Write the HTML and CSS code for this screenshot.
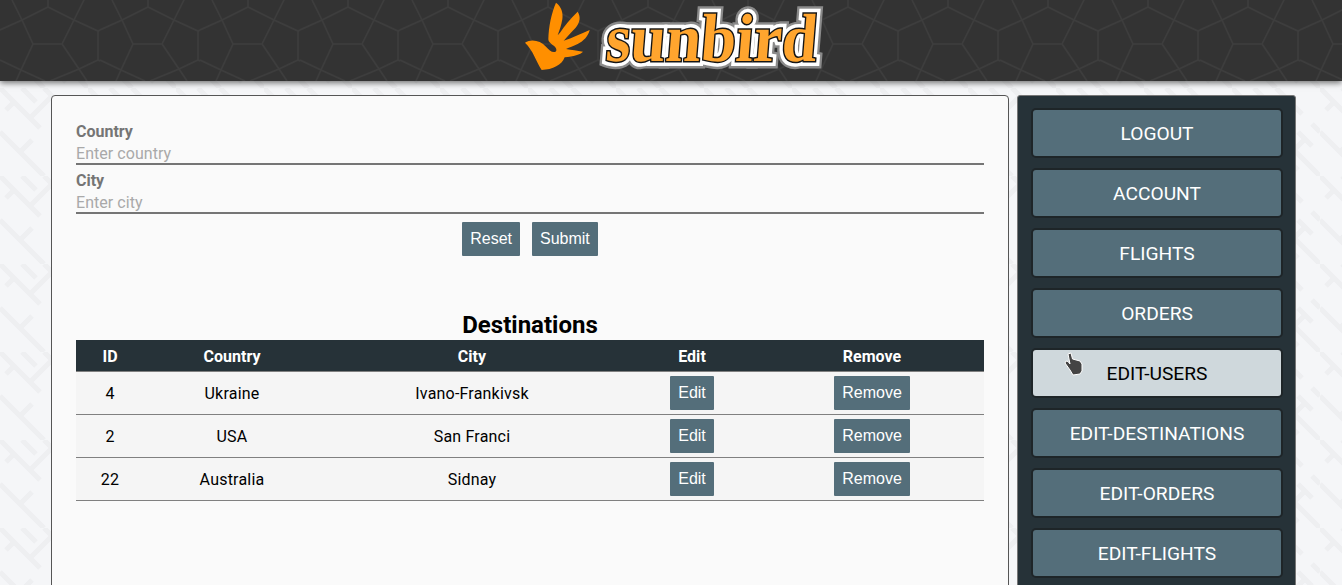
FILE: index.html
```html
<!DOCTYPE html>
<html lang="en">
<head>
<meta charset="utf-8">
<title>Sunbird</title>
<link rel="stylesheet" href="styles.css">
</head>
<body>
<header class="site-header">
  <div class="brand">
    <svg class="brand-hand" viewBox="0 0 360 240" aria-hidden="true">
      <path d="M42 128 C62 116 88 122 105 140 C114 150 122 158 132 156 C140 153 136 142 126 136 C118 130 112 125 112 118 C113 80 121 40 135 8 C151 20 157 38 154 58 C151 76 146 90 140 106 L147 98 C161 78 178 55 200 35 C210 50 207 68 194 83 C181 97 170 108 158 122 C184 114 208 102 236 90 C232 108 218 123 200 132 C186 139 176 142 165 147 C182 150 198 152 216 155 C208 164 188 169 161 172 C153 195 125 209 92 210 C78 190 66 150 42 128 Z"/>
    </svg>
    <span class="brand-word" data-text="sunbird">sunbird</span>
  </div>
</header>

<main class="layout">
  <section class="panel">
    <form class="dest-form">
      <div class="field">
        <label class="field-label" for="country">Country</label>
        <input class="field-input" id="country" type="text" placeholder="Enter country">
      </div>
      <div class="field">
        <label class="field-label" for="city">City</label>
        <input class="field-input" id="city" type="text" placeholder="Enter city">
      </div>
      <div class="form-actions">
        <button class="btn" type="button">Reset</button>
        <button class="btn" type="button">Submit</button>
      </div>
    </form>

    <h2 class="table-title">Destinations</h2>
    <table class="dest-table">
      <colgroup>
        <col class="col-id"><col class="col-country"><col class="col-city"><col class="col-edit"><col class="col-remove">
      </colgroup>
      <thead>
        <tr><th>ID</th><th>Country</th><th>City</th><th>Edit</th><th>Remove</th></tr>
      </thead>
      <tbody>
        <tr><td>4</td><td>Ukraine</td><td>Ivano-Frankivsk</td><td><button class="btn" type="button">Edit</button></td><td><button class="btn" type="button">Remove</button></td></tr>
        <tr><td>2</td><td>USA</td><td>San Franci</td><td><button class="btn" type="button">Edit</button></td><td><button class="btn" type="button">Remove</button></td></tr>
        <tr><td>22</td><td>Australia</td><td>Sidnay</td><td><button class="btn" type="button">Edit</button></td><td><button class="btn" type="button">Remove</button></td></tr>
      </tbody>
    </table>
  </section>

  <nav class="sidebar">
    <a class="nav-btn">LOGOUT</a>
    <a class="nav-btn">ACCOUNT</a>
    <a class="nav-btn">FLIGHTS</a>
    <a class="nav-btn">ORDERS</a>
    <a class="nav-btn is-hover">EDIT-USERS
      <svg class="cursor" viewBox="0 0 20 24" aria-hidden="true">
        <path d="M4 2 L7 1 L8.5 7 L16 9 L18 12 L18 19 L16 22 L9 23 L6 18 L1 11 L2 9 L4 9.5 L6 12 Z"/>
      </svg>
    </a>
    <a class="nav-btn">EDIT-DESTINATIONS</a>
    <a class="nav-btn">EDIT-ORDERS</a>
    <a class="nav-btn">EDIT-FLIGHTS</a>
  </nav>
</main>
</body>
</html>
```
FILE: styles.css
```css
* { box-sizing: border-box; }

html, body {
  margin: 0;
  height: 585px;
  overflow: hidden;
}

body {
  font-family: Roboto, "Liberation Sans", sans-serif;
  font-size: 16px;
  color: #000;
  background-color: #f5f6f8;
  background-image: url("data:image/svg+xml,%3Csvg xmlns='http://www.w3.org/2000/svg' width='88' height='88'%3E%3Cg fill='none' stroke='%23eeeff1' stroke-width='5'%3E%3Cpath d='M0 0L40 40M55 55L88 88M44 0L70 26M80 36L88 44M0 44L44 88M30 30L52 8M62 62L73 51M22 0L36 14M66 44L80 58M20 64L32 52M14 14L6 22M58 74L66 82'/%3E%3C/g%3E%3C/svg%3E");
}

.site-header {
  height: 81px;
  display: flex;
  justify-content: center;
  background-color: #333;
  background-image: url("data:image/svg+xml,%3Csvg xmlns='http://www.w3.org/2000/svg' width='100' height='81'%3E%3Cg fill='none' stroke='%233d3d3d' stroke-width='1.6'%3E%3Cpath d='M48 0V7L22 20L0 30M48 7L74 20L98 31L100 30M98 31V60L100 61M12 0L22 20L33 44H62L74 20L84 0M33 44L21 70L16 81M0 60L21 70L45 81M62 44L79 69L87 81M98 60L79 69L50 81'/%3E%3C/g%3E%3C/svg%3E");
  background-repeat: repeat-x;
  box-shadow: 0 2px 6px rgba(0, 0, 0, .55);
}

.brand {
  display: flex;
  align-items: flex-start;
}

.brand-hand {
  width: 120px;
  height: 80px;
  flex: none;
  fill: #ff8f00;
}

.brand-word {
  position: relative;
  isolation: isolate;
  width: 240px;
  margin: 3px 0 0 -39px;
  font-family: "Liberation Serif", serif;
  font-weight: 700;
  font-size: 68px;
  line-height: 70px;
  text-align: center;
  color: #ffa52e;
  -webkit-text-stroke: 3px #151515;
  paint-order: stroke fill;
  transform: scaleX(.93) skewX(-5deg);
}

.brand-word::before,
.brand-word::after {
  content: attr(data-text);
  position: absolute;
  left: 0;
  right: 0;
  top: 0;
  z-index: -1;
}

.brand-word::before {
  color: #8a8a8a;
  -webkit-text-stroke: 15px #8a8a8a;
}

.brand-word::after {
  color: #fff;
  -webkit-text-stroke: 10px #fff;
}

.layout {
  display: flex;
  align-items: flex-start;
  gap: 8px;
  padding: 14px 0 0 51px;
}

.panel {
  width: 958px;
  height: 560px;
  flex: none;
  padding: 26px 24px 0;
  background: #fafafa;
  border: 1px solid #555;
  border-radius: 4px;
}

.field { margin-bottom: 6px; }

.field-label {
  display: block;
  font-weight: 700;
  line-height: 19px;
  color: #757575;
}

.field-input {
  display: block;
  width: 100%;
  height: 24px;
  padding: 2px 0 0;
  border: 0;
  border-bottom: 2px solid #757575;
  background: transparent;
  font-family: Roboto, sans-serif;
  font-size: 16px;
  letter-spacing: .05px;
  outline: none;
}

.field-input::placeholder {
  color: #a9a9a9;
  opacity: 1;
}

.form-actions {
  display: flex;
  justify-content: center;
  gap: 12px;
  margin-top: 8px;
}

.btn {
  height: 34px;
  padding: 0 8px;
  border: 0;
  border-radius: 1px;
  background: #546e7a;
  color: #fff;
  font-family: "Liberation Sans", Arial, sans-serif;
  font-size: 16px;
  letter-spacing: 0;
}

.table-title {
  margin: 55px 0 1px;
  font-size: 24px;
  font-weight: 700;
  line-height: 28px;
  text-align: center;
}

.dest-table {
  width: 100%;
  table-layout: fixed;
  border-collapse: separate;
  border-spacing: 0;
  text-align: center;
  letter-spacing: .2px;
}

.col-id { width: 68px; }
.col-country { width: 176px; }
.col-city { width: 304px; }
.col-edit { width: 136px; }
.col-remove { width: 224px; }

.dest-table th {
  height: 32px;
  padding: 1px 0 0;
  background: #263238;
  border-bottom: 1px solid #808080;
  color: #fff;
  font-weight: 700;
  letter-spacing: .05px;
}

.dest-table td {
  height: 43px;
  padding: 4px 0;
  background: #f5f5f5;
  border-bottom: 1px solid #808080;
}

.dest-table td .btn { display: block; margin: 0 auto; }

.sidebar {
  width: 279px;
  height: 560px;
  flex: none;
  display: flex;
  flex-direction: column;
  gap: 10px;
  padding: 12px 12px 0 13px;
  background: #263238;
  border: 1px solid #777;
  border-radius: 3px;
}

.nav-btn {
  position: relative;
  display: flex;
  flex: none;
  align-items: center;
  justify-content: center;
  height: 50px;
  background: #546e7a;
  border: 2px solid #1e2528;
  border-radius: 5px;
  color: #fff;
  font-size: 19.2px;
}

.nav-btn.is-hover {
  background: #cfd8dc;
  color: #000;
}

.cursor {
  position: absolute;
  left: 31px;
  top: 2px;
  width: 20px;
  height: 24px;
  fill: #444;
  stroke: #fff;
  stroke-width: 1;
}
```
